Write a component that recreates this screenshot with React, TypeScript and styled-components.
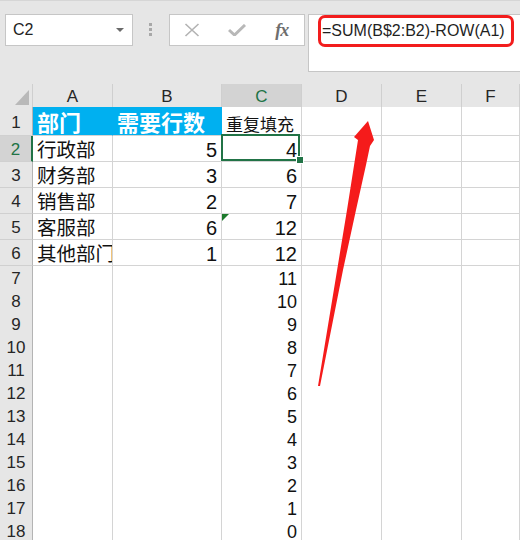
import React from "react";
import styled, { createGlobalStyle } from "styled-components";

const GlobalStyle = createGlobalStyle`
  html, body {
    margin: 0;
    padding: 0;
    background: #fff;
  }
  body {
    font-family: "Liberation Sans", "Noto Sans CJK SC", sans-serif;
  }
`;

const COLUMNS = "33px 80px 109px 80px 80px 80px 1fr";
const CJK = `"Noto Sans CJK SC", "Liberation Sans", sans-serif`;

type Row = {
  n: number;
  h: number;
  a?: string;
  b?: string;
  c?: string;
};

const rows: Row[] = [
  { n: 1, h: 29, a: "部门", b: "需要行数", c: "重复填充" },
  { n: 2, h: 26, a: "行政部", b: "5", c: "4" },
  { n: 3, h: 26, a: "财务部", b: "3", c: "6" },
  { n: 4, h: 26, a: "销售部", b: "2", c: "7" },
  { n: 5, h: 26, a: "客服部", b: "6", c: "12" },
  { n: 6, h: 26, a: "其他部门", b: "1", c: "12" },
  ...[11, 10, 9, 8, 7, 6, 5, 4, 3, 2, 1, 0].map((v, i) => ({
    n: 7 + i,
    h: 23,
    c: String(v),
  })),
];

const Page = styled.div`
  position: relative;
  width: 520px;
  height: 540px;
  overflow: hidden;
  background: #fff;
`;

const Toolbar = styled.div`
  display: flex;
  align-items: flex-start;
  height: 84px;
  box-sizing: border-box;
  padding: 13px 0 0 5px;
  background: #e6e6e6;
  border-top: 1px solid #d6d6d6;
`;

const NameBox = styled.div`
  display: flex;
  align-items: center;
  justify-content: space-between;
  width: 128px;
  height: 32px;
  box-sizing: border-box;
  padding: 0 8px 0 7px;
  background: #fff;
  border: 1px solid #c6c6c6;
  font-size: 16px;
  color: #222;
`;

const Caret = styled.span`
  width: 0;
  height: 0;
  border-left: 4px solid transparent;
  border-right: 4px solid transparent;
  border-top: 4px solid #6a6a6a;
`;

const Grip = styled.div`
  display: flex;
  flex-direction: column;
  gap: 2px;
  margin: 9px 0 0 16px;

  span {
    width: 3px;
    height: 3px;
    background: #a8a8a8;
  }
`;

const ButtonBox = styled.div`
  display: grid;
  grid-template-columns: repeat(3, 1fr);
  width: 136px;
  height: 32px;
  margin-left: 17px;
  box-sizing: border-box;
  background: #fff;
  border: 1px solid #c6c6c6;
`;

const ToolButton = styled.div`
  display: flex;
  align-items: center;
  justify-content: center;
  color: #6a6a6a;
`;

const FxLabel = styled.span`
  font-family: "Liberation Serif", serif;
  font-style: italic;
  font-weight: 700;
  font-size: 18px;
  color: #6e6e6e;
  letter-spacing: -1px;
`;

const FormulaBar = styled.div`
  flex: 1;
  height: 58px;
  margin: 0 -2px 0 3px;
  box-sizing: border-box;
  padding-left: 9px;
  background: #fff;
  border: 1px solid #c6c6c6;
`;

const FormulaHighlight = styled.span`
  display: inline-flex;
  align-items: center;
  height: 32px;
  box-sizing: border-box;
  padding: 0 6px 0 1px;
  border: 3px solid #f21d1d;
  border-radius: 7px;
  font-size: 16px;
  color: #1f1f1f;
  white-space: nowrap;
`;

const Sheet = styled.div`
  display: flex;
  flex-direction: column;
`;

const SheetRow = styled.div<{ $h: number }>`
  display: grid;
  grid-template-columns: ${COLUMNS};
  height: ${({ $h }) => $h}px;
`;

const Corner = styled.div`
  display: flex;
  align-items: flex-end;
  justify-content: flex-end;
  padding: 0 3px 3px 0;
  background: #e6e6e6;
  border-right: 1px solid #cfcfcf;
  border-bottom: 1px solid #bdbdbd;

  span {
    width: 0;
    height: 0;
    border-left: 14px solid transparent;
    border-bottom: 15px solid #b9b9b9;
  }
`;

const ColHeader = styled.div<{ $active?: boolean }>`
  display: flex;
  align-items: center;
  justify-content: center;
  box-sizing: border-box;
  background: ${({ $active }) => ($active ? "#d3d3d3" : "#e6e6e6")};
  border-right: 1px solid #cfcfcf;
  border-bottom: ${({ $active }) =>
    $active ? "2px solid #217346" : "1px solid #bdbdbd"};
  padding-top: ${({ $active }) => ($active ? "3px" : "2px")};
  font-size: 17px;
  color: ${({ $active }) => ($active ? "#217346" : "#262626")};
`;

const RowHeader = styled.div<{ $active?: boolean }>`
  display: flex;
  align-items: center;
  justify-content: center;
  box-sizing: border-box;
  background: ${({ $active }) => ($active ? "#d3d3d3" : "#e6e6e6")};
  border-right: ${({ $active }) =>
    $active ? "2px solid #217346" : "1px solid #b4b4b4"};
  border-bottom: 1px solid #d0d0d0;
  padding-top: 3px;
  font-size: 17px;
  color: ${({ $active }) => ($active ? "#217346" : "#262626")};
`;

const Cell = styled.div<{
  $right?: boolean;
  $fill?: boolean;
  $size?: number;
  $cjk?: boolean;
  $selected?: boolean;
  $flag?: boolean;
}>`
  position: relative;
  display: flex;
  align-items: flex-end;
  justify-content: ${({ $right }) => ($right ? "flex-end" : "flex-start")};
  box-sizing: border-box;
  min-width: 0;
  padding: 0 4px ${({ $cjk }) => ($cjk ? 3 : 1)}px 4px;
  overflow: ${({ $selected }) => ($selected ? "visible" : "hidden")};
  white-space: nowrap;
  background: ${({ $fill }) => ($fill ? "#00b0f0" : "#fff")};
  border-right: 1px solid ${({ $fill }) => ($fill ? "#00b0f0" : "#d4d4d4")};
  border-bottom: 1px solid #d4d4d4;
  font-family: ${({ $cjk }) => ($cjk ? CJK : `"Liberation Sans", sans-serif`)};
  font-size: ${({ $size }) => $size ?? 17}px;
  font-weight: ${({ $fill }) => ($fill ? 700 : 400)};
  color: ${({ $fill }) => ($fill ? "#fff" : "#111")};
  line-height: 1;

  ${({ $selected }) =>
    $selected &&
    `
    &::before {
      content: "";
      position: absolute;
      top: -2px;
      left: -1px;
      right: 1px;
      bottom: 0;
      border: 2px solid #217346;
      z-index: 2;
    }
    &::after {
      content: "";
      position: absolute;
      right: -2px;
      bottom: -2px;
      width: 6px;
      height: 6px;
      background: #217346;
      box-shadow: 0 0 0 1px #fff;
      z-index: 3;
    }
  `}

  ${({ $flag }) =>
    $flag &&
    `
    &::before {
      content: "";
      position: absolute;
      top: 0;
      left: 0;
      border-top: 7px solid #1d7a2c;
      border-right: 7px solid transparent;
    }
  `}
`;

const ArrowLayer = styled.svg`
  position: absolute;
  top: 0;
  left: 0;
  pointer-events: none;
`;

const App = () => (
  <Page>
    <GlobalStyle />
    <Toolbar>
      <NameBox>
        C2
        <Caret />
      </NameBox>
      <Grip>
        <span />
        <span />
        <span />
      </Grip>
      <ButtonBox>
        <ToolButton>
          <svg width="16" height="14" viewBox="0 0 16 14">
            <path d="M1.5 1 L14.5 13 M14.5 1 L1.5 13" stroke="#b3b3b3" strokeWidth="1.6" fill="none" />
          </svg>
        </ToolButton>
        <ToolButton>
          <svg width="18" height="12" viewBox="0 0 18 12">
            <path d="M1 6 L6.5 11 L17 1" stroke="#b8b8b8" strokeWidth="3" fill="none" />
          </svg>
        </ToolButton>
        <ToolButton>
          <FxLabel>fx</FxLabel>
        </ToolButton>
      </ButtonBox>
      <FormulaBar>
        <FormulaHighlight>=SUM(B$2:B2)-ROW(A1)</FormulaHighlight>
      </FormulaBar>
    </Toolbar>

    <Sheet>
      <SheetRow $h={23}>
        <Corner>
          <span />
        </Corner>
        <ColHeader>A</ColHeader>
        <ColHeader>B</ColHeader>
        <ColHeader $active>C</ColHeader>
        <ColHeader>D</ColHeader>
        <ColHeader>E</ColHeader>
        <ColHeader>F</ColHeader>
      </SheetRow>

      {rows.map((r) => {
        const head = r.n === 1;
        const data = r.n >= 2 && r.n <= 6;
        return (
          <SheetRow key={r.n} $h={r.h}>
            <RowHeader $active={r.n === 2}>{r.n}</RowHeader>
            <Cell $fill={head} $cjk $size={head ? 22 : 19.5}>
              {r.a}
            </Cell>
            <Cell $fill={head} $cjk={head} $right={!head} $size={head ? 22 : 20}>
              {r.b}
            </Cell>
            <Cell
              $cjk={head}
              $right={!head}
              $size={head ? 17 : data ? 20 : 18}
              $selected={r.n === 2}
              $flag={r.n === 5}
            >
              {r.c}
            </Cell>
            <Cell />
            <Cell />
            <Cell />
          </SheetRow>
        );
      })}
    </Sheet>

    <ArrowLayer width="520" height="540" viewBox="0 0 520 540">
      <polygon
        points="318,386 347,210 358,140 354,137 368,121 374,140 370,146 366,165 356,210 343,270 320,386"
        fill="#f51b1b"
      />
    </ArrowLayer>
  </Page>
);

export default App;
